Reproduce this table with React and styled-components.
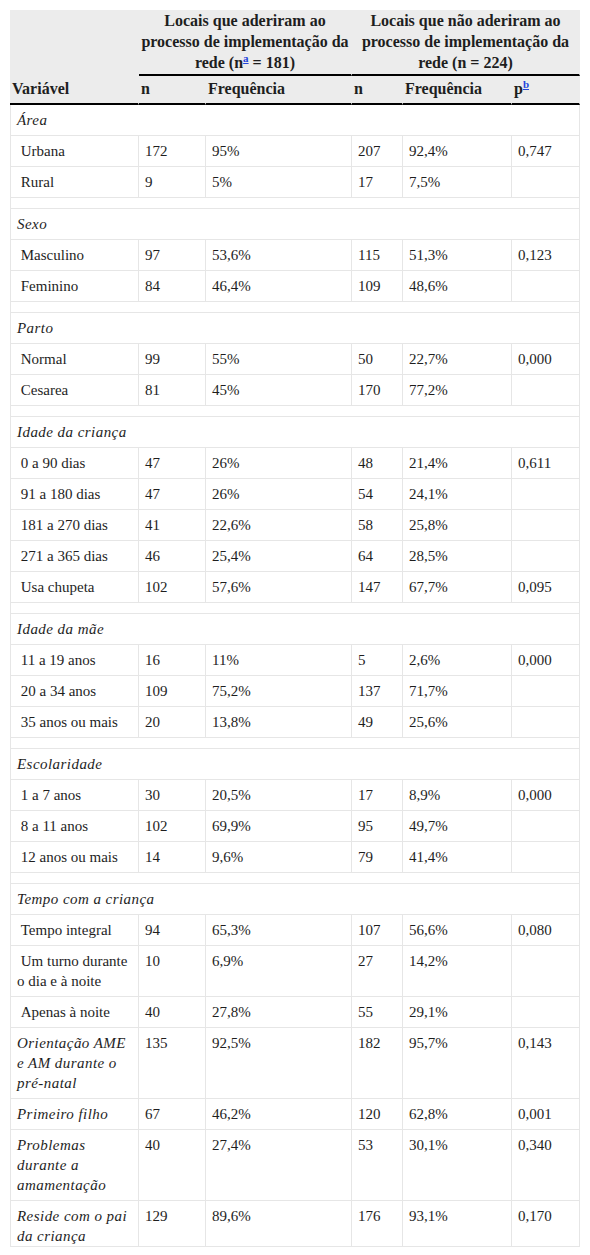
import React from "react";
import styled, { createGlobalStyle } from "styled-components";

const GlobalStyle = createGlobalStyle`
  html, body {
    margin: 0;
    padding: 0;
    background: #ffffff;
  }
`;

const Page = styled.div`
  padding: 10px;
`;

const Table = styled.table`
  width: 570px;
  table-layout: fixed;
  border-collapse: separate;
  border-spacing: 0;
  font-family: "Liberation Serif", "Times New Roman", serif;
  color: #1e1e1e;
`;

const HeadCell = styled.th`
  background: #ececec;
  font-family: "Liberation Serif", "Times New Roman", serif;
  font-size: 16px;
  font-weight: bold;
  line-height: 21px;
  padding: ${(p) => (p.$group ? "0 2px 1px" : "2px 2px 4px")};
  text-align: ${(p) => (p.$center ? "center" : "left")};
  vertical-align: bottom;
  border-bottom: 2px solid #000;
  border-right: 1px solid transparent;
`;

const Cell = styled.td`
  font-family: "Liberation Serif", "Times New Roman", serif;
  font-size: 15px;
  line-height: 20px;
  padding: ${(p) => (p.$last ? "5px 6px 0" : "5px 6px")};
  vertical-align: top;
  font-style: ${(p) => (p.$italic ? "italic" : "normal")};
  letter-spacing: ${(p) => (p.$italic ? "0.45px" : "0")};
  border-right: 1px solid #e6e6e6;
  border-bottom: 1px solid #e6e6e6;
  &:first-child {
    border-left: 1px solid #e6e6e6;
  }
`;

const SectionCell = styled(Cell)`
  font-style: italic;
  letter-spacing: 0.45px;
`;

const SpacerCell = styled.td`
  padding: 5px 0;
  border-left: 1px solid #e6e6e6;
  border-right: 1px solid #e6e6e6;
  border-bottom: 1px solid #e6e6e6;
`;

const NoteLink = styled.a`
  font-size: 11px;
  vertical-align: super;
  line-height: 0;
  color: #2244dd;
  text-decoration: underline;
`;

const groups = [
  {
    title: "Área",
    rows: [
      [" Urbana", "172", "95%", "207", "92,4%", "0,747"],
      [" Rural", "9", "5%", "17", "7,5%", ""],
    ],
  },
  {
    title: "Sexo",
    rows: [
      [" Masculino", "97", "53,6%", "115", "51,3%", "0,123"],
      [" Feminino", "84", "46,4%", "109", "48,6%", ""],
    ],
  },
  {
    title: "Parto",
    rows: [
      [" Normal", "99", "55%", "50", "22,7%", "0,000"],
      [" Cesarea", "81", "45%", "170", "77,2%", ""],
    ],
  },
  {
    title: "Idade da criança",
    rows: [
      [" 0 a 90 dias", "47", "26%", "48", "21,4%", "0,611"],
      [" 91 a 180 dias", "47", "26%", "54", "24,1%", ""],
      [" 181 a 270 dias", "41", "22,6%", "58", "25,8%", ""],
      [" 271 a 365 dias", "46", "25,4%", "64", "28,5%", ""],
      [" Usa chupeta", "102", "57,6%", "147", "67,7%", "0,095"],
    ],
  },
  {
    title: "Idade da mãe",
    rows: [
      [" 11 a 19 anos", "16", "11%", "5", "2,6%", "0,000"],
      [" 20 a 34 anos", "109", "75,2%", "137", "71,7%", ""],
      [" 35 anos ou mais", "20", "13,8%", "49", "25,6%", ""],
    ],
  },
  {
    title: "Escolaridade",
    rows: [
      [" 1 a 7 anos", "30", "20,5%", "17", "8,9%", "0,000"],
      [" 8 a 11 anos", "102", "69,9%", "95", "49,7%", ""],
      [" 12 anos ou mais", "14", "9,6%", "79", "41,4%", ""],
    ],
  },
  {
    title: "Tempo com a criança",
    rows: [
      [" Tempo integral", "94", "65,3%", "107", "56,6%", "0,080"],
      [" Um turno durante o dia e à noite", "10", "6,9%", "27", "14,2%", ""],
      [" Apenas à noite", "40", "27,8%", "55", "29,1%", ""],
    ],
  },
];

const standalone = [
  ["Orientação AME e AM durante o pré-natal", "135", "92,5%", "182", "95,7%", "0,143"],
  ["Primeiro filho", "67", "46,2%", "120", "62,8%", "0,001"],
  ["Problemas durante a amamentação", "40", "27,4%", "53", "30,1%", "0,340"],
  ["Reside com o pai da criança", "129", "89,6%", "176", "93,1%", "0,170"],
];

function DataRow({ cells, italic, last }) {
  return (
    <tr>
      {cells.map((c, i) => (
        <Cell key={i} $italic={italic && i === 0} $last={last}>
          {i === 0 ? c.replace(/^ /, "\u00a0") : c}
        </Cell>
      ))}
    </tr>
  );
}

export default function App() {
  return (
    <Page>
      <GlobalStyle />
      <Table>
        <colgroup>
          <col style={{ width: 129 }} />
          <col style={{ width: 67 }} />
          <col style={{ width: 146 }} />
          <col style={{ width: 51 }} />
          <col style={{ width: 109 }} />
          <col style={{ width: 68 }} />
        </colgroup>
        <thead>
          <tr>
            <HeadCell rowSpan={2}>Variável</HeadCell>
            <HeadCell colSpan={2} $center $group>
              Locais que aderiram ao processo de implementação da rede (n
              <NoteLink href="#a">a</NoteLink> = 181)
            </HeadCell>
            <HeadCell colSpan={3} $center $group>
              Locais que não aderiram ao processo de implementação da rede (n =
              224)
            </HeadCell>
          </tr>
          <tr>
            <HeadCell>n</HeadCell>
            <HeadCell>Frequência</HeadCell>
            <HeadCell>n</HeadCell>
            <HeadCell>Frequência</HeadCell>
            <HeadCell>
              p<NoteLink href="#b">b</NoteLink>
            </HeadCell>
          </tr>
        </thead>
        <tbody>
          {groups.map((g, gi) => (
            <React.Fragment key={g.title}>
              {gi > 0 && (
                <tr>
                  <SpacerCell colSpan={6} />
                </tr>
              )}
              <tr>
                <SectionCell colSpan={6}>{g.title}</SectionCell>
              </tr>
              {g.rows.map((r, ri) => (
                <DataRow key={ri} cells={r} />
              ))}
            </React.Fragment>
          ))}
          {standalone.map((r, ri) => (
            <DataRow
              key={"s" + ri}
              cells={r}
              italic
              last={ri === standalone.length - 1}
            />
          ))}
        </tbody>
      </Table>
    </Page>
  );
}
